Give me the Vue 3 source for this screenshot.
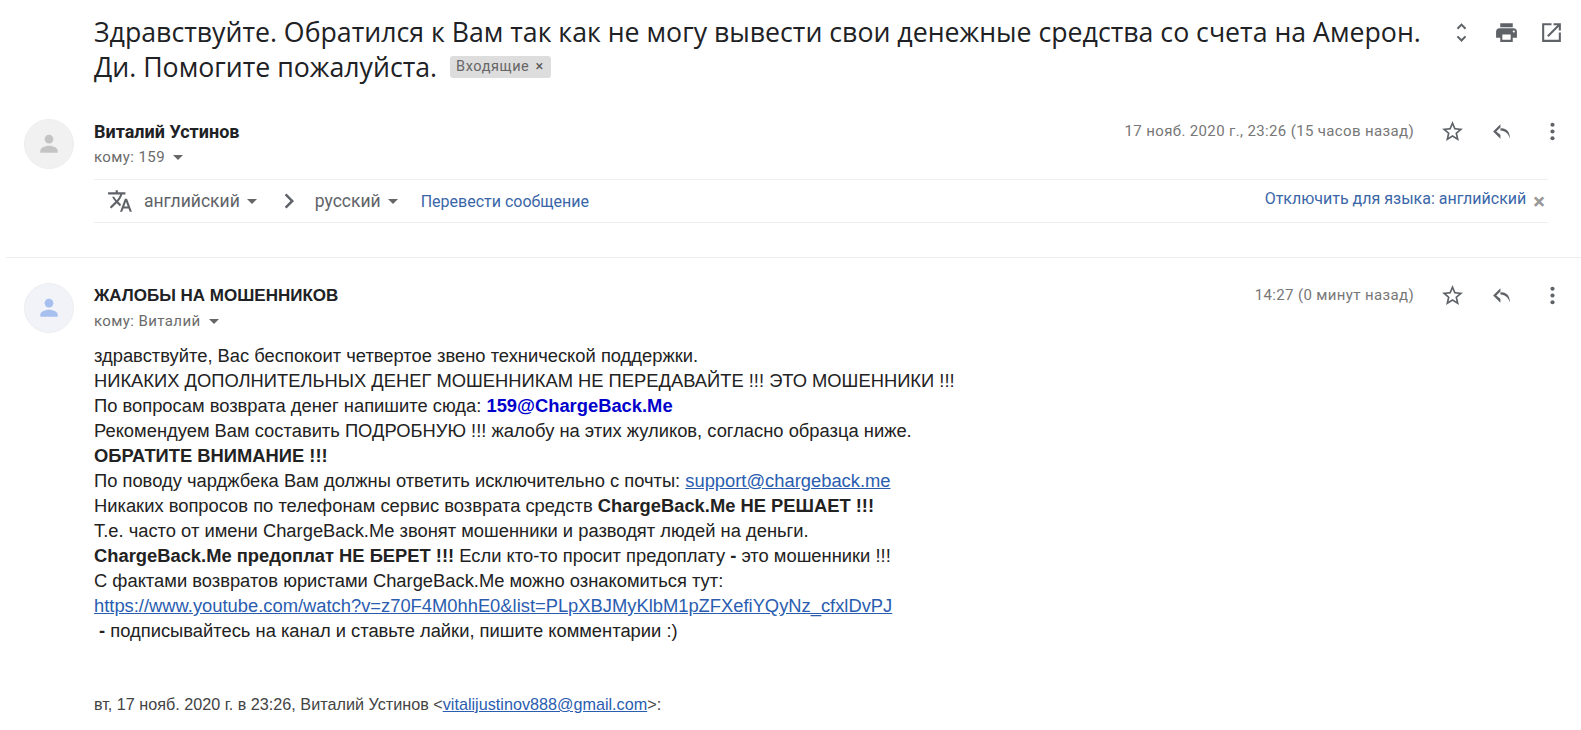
<template>
  <div class="thread">
    <div class="subject-row">
      <h2 class="subject">
        Здравствуйте. Обратился к Вам так как не могу вывести свои денежные средства со счета на Амерон. Ди. Помогите пожалуйста.
        <span class="label"><span>Входящие</span><span class="label-x">×</span></span>
      </h2>
      <div class="subject-icons">
        <svg viewBox="0 0 24 24" class="icon"><path d="M12 5.83 15.17 9l1.41-1.41L12 3 7.41 7.59 8.83 9 12 5.83zm0 12.34L8.83 15l-1.41 1.41L12 21l4.59-4.59L15.17 15 12 18.17z" /></svg>
        <svg viewBox="0 0 24 24" class="icon"><path d="M19 8H5c-1.66 0-3 1.34-3 3v6h4v4h12v-4h4v-6c0-1.66-1.34-3-3-3zm-3 11H8v-5h8v5zm3-7c-.55 0-1-.45-1-1s.45-1 1-1 1 .45 1 1-.45 1-1 1zm-1-9H6v4h12V3z" /></svg>
        <svg viewBox="0 0 24 24" class="icon"><path d="M19 19H5V5h7V3H3v18h18v-9h-2v7zM14 3v2h3.590l-9.830 9.830 1.410 1.410L19 6.410V10h2V3h-7z" /></svg>
      </div>
    </div>

    <section v-for="msg in messages" :key="msg.name" class="message" :class="msg.cls">
      <div class="avatar" :class="{ blue: msg.blue }">
        <svg viewBox="0 0 24 24"><circle cx="12" cy="7.500" r="4" /><path d="M4 20v-2c0-3 5.300-4.400 8-4.400s8 1.400 8 4.400v2z" /></svg>
      </div>
      <div class="message-main">
        <div class="head">
          <div>
            <div class="sender">{{ msg.name }}</div>
            <div class="to">{{ msg.to }} <span class="caret"></span></div>
          </div>
          <div class="head-right">
            <span class="date">{{ msg.date }}</span>
            <svg viewBox="0 0 24 24" class="icon"><path d="M22 9.240l-7.190-.620L12 2 9.190 8.630 2 9.240l5.460 4.730L5.820 21 12 17.270 18.180 21l-1.630-7.030L22 9.240zM12 15.400l-3.760 2.270 1-4.280-3.320-2.880 4.380-.380L12 6.100l1.710 4.040 4.380.380-3.320 2.880 1 4.280L12 15.400z" /></svg>
            <svg viewBox="0 0 24 24" class="icon"><path d="M10 9V5l-7 7 7 7v-2.400l-.010-1.600L6 12l4-3.900V9zm0 0v2c5 .500 8 3 9 8 .400-5-2-10.500-9-10z" /></svg>
            <svg viewBox="0 0 24 24" class="icon"><circle cx="12" cy="5.500" r="2" /><circle cx="12" cy="12" r="2" /><circle cx="12" cy="18.500" r="2" /></svg>
          </div>
        </div>

        <div v-if="msg.translate" class="translate-bar">
          <svg viewBox="0 0 24 24" class="translate-icon"><path d="M12.870 15.070l-2.540-2.510.030-.030c1.740-1.940 2.980-4.170 3.710-6.530H17V4h-7V2H8v2H1v1.990h11.170C11.500 7.920 10.440 9.750 9 11.350 8.070 10.320 7.300 9.190 6.690 8h-2c.730 1.630 1.730 3.170 2.980 4.560l-5.090 5.020L4 19l5-5 3.110 3.110.760-2.040zM18.500 10h-2L12 22h2l1.120-3h4.750L21 22h2l-4.500-12zm-2.620 7l1.620-4.330L19.120 17h-3.240z" /></svg>
          <span class="lang">английский</span><span class="caret"></span>
          <svg viewBox="0 0 24 24" class="chevron"><path d="M8.590 16.590 13.170 12 8.590 7.410 10 6l6 6-6 6z" /></svg>
          <span class="lang">русский</span><span class="caret"></span>
          <a class="translate-link">Перевести сообщение</a>
          <span class="spacer"></span>
          <a class="disable-link">Отключить для языка: английский</a>
          <span class="close-x">×</span>
        </div>

        <div v-if="msg.body" class="body">
          <div>здравствуйте, Вас беспокоит четвертое звено технической поддержки.</div>
          <div>НИКАКИХ ДОПОЛНИТЕЛЬНЫХ ДЕНЕГ МОШЕННИКАМ НЕ ПЕРЕДАВАЙТЕ !!! ЭТО МОШЕННИКИ !!!</div>
          <div>По вопросам возврата денег напишите сюда: <b class="mail-blue">159@ChargeBack.Me</b></div>
          <div>Рекомендуем Вам составить ПОДРОБНУЮ !!! жалобу на этих жуликов, согласно образца ниже.</div>
          <div><b>ОБРАТИТЕ ВНИМАНИЕ !!!</b></div>
          <div>По поводу чарджбека Вам должны ответить исключительно с почты: <a>support@chargeback.me</a></div>
          <div>Никаких вопросов по телефонам сервис возврата средств <b>ChargeBack.Me НЕ РЕШАЕТ !!!</b></div>
          <div>Т.е. часто от имени ChargeBack.Me звонят мошенники и разводят людей на деньги.</div>
          <div><b>ChargeBack.Me предоплат НЕ БЕРЕТ !!!</b> Если кто-то просит предоплату <b>-</b> это мошенники !!!</div>
          <div>С фактами возвратов юристами ChargeBack.Me можно ознакомиться тут:</div>
          <div><a>https://www.youtube.com/watch?v=z70F4M0hhE0&amp;list=PLpXBJMyKlbM1pZFXefiYQyNz_cfxlDvPJ</a></div>
          <div>&nbsp;<b>-</b> подписывайтесь на канал и ставьте лайки, пишите комментарии :)</div>
          <div class="quote-head">вт, 17 нояб. 2020 г. в 23:26, Виталий Устинов &lt;<a>vitalijustinov888@gmail.com</a>&gt;:</div>
        </div>
      </div>
    </section>
  </div>
</template>

<script setup>
const messages = [
  {
    name: 'Виталий Устинов',
    to: 'кому: 159',
    date: '17 нояб. 2020 г., 23:26 (15 часов назад)',
    translate: true,
    cls: 'first'
  },
  {
    name: 'ЖАЛОБЫ НА МОШЕННИКОВ',
    to: 'кому: Виталий',
    date: '14:27 (0 минут назад)',
    blue: true,
    body: true,
    cls: 'second'
  }
];
</script>

<style>
html, body {
  background: #fff;
  overflow: hidden;
}
</style>

<style scoped>
.thread {
  width: 1581px;
  height: 730px;
  overflow: hidden;
  font-family: Roboto, "Liberation Sans", sans-serif;
  color: #222;
  background: #fff;
}

.subject-row {
  display: flex;
  align-items: flex-start;
  padding: 14px 20px 0 94px;
  height: 105px;
  box-sizing: border-box;
}

.subject {
  margin: 0;
  width: 1335px;
  flex: none;
  font-family: "Open Sans", sans-serif;
  font-size: 26.700px;
  font-weight: 400;
  line-height: 35px;
  color: #202124;
}

.label {
  display: inline-flex;
  gap: 6px;
  margin-left: 6px;
  padding: 0 7px 0 6px;
  height: 22px;
  line-height: 22px;
  vertical-align: 6px;
  background: #ddd;
  border-radius: 3px;
  font-family: Roboto, sans-serif;
  font-size: 14.500px;
  letter-spacing: .6px;
  color: #666;
}

.label-x {
  color: #555;
}

.subject-icons {
  display: flex;
  gap: 20px;
  margin-left: 20px;
  padding-top: 6px;
}

.icon {
  width: 25px;
  height: 25px;
  fill: #5f6368;
  flex: none;
}

.message {
  display: flex;
  padding-left: 24px;
}

.message.first {
  height: 152px;
  padding-top: 14px;
  box-sizing: border-box;
}

.message.second {
  margin-left: 6px;
  padding-left: 18px;
  border-top: 1px solid #eee;
  padding-top: 25px;
}

.avatar {
  width: 50px;
  height: 50px;
  border-radius: 50%;
  background: #f1f1f1;
  border: 1px solid #eee;
  box-sizing: border-box;
  display: flex;
  align-items: center;
  justify-content: center;
  flex: none;
}

.avatar svg {
  width: 26px;
  height: 26px;
  fill: #c4c4c4;
}

.avatar.blue {
  background: #f1f3f8;
}

.avatar.blue svg {
  fill: #a6bfee;
}

.message-main {
  margin-left: 20px;
  width: 1477px;
}

.head {
  display: flex;
  justify-content: space-between;
}

.sender {
  font-size: 18px;
  font-weight: 700;
  line-height: 25px;
  color: #202124;
}

.second .sender {
  font-family: "Liberation Sans", sans-serif;
  font-size: 17px;
}

.to {
  font-size: 15px;
  line-height: 24px;
  margin-top: 1px;
  color: #6b6b6b;
  letter-spacing: .4px;
}

.caret {
  display: inline-block;
  width: 0;
  height: 0;
  margin-left: 4px;
  vertical-align: 2px;
  border-left: 5px solid transparent;
  border-right: 5px solid transparent;
  border-top: 5px solid #666;
}

.head-right {
  display: flex;
  align-items: flex-start;
  gap: 25px;
  margin-right: 6px;
}

.date {
  font-size: 15px;
  line-height: 24px;
  letter-spacing: .36px;
  margin-right: 1px;
  color: #777;
}

.translate-bar {
  display: flex;
  align-items: center;
  height: 42px;
  margin-top: 10px;
  border-top: 1px solid #eee;
  border-bottom: 1px solid #eee;
  font-size: 17.500px;
  color: #5f6368;
  width: 1454px;
}

.translate-bar .caret {
  margin-left: 7px;
}

.translate-icon {
  width: 26px;
  height: 26px;
  fill: #5f6368;
  margin: 0 11px 0 13px;
}

.chevron {
  width: 30px;
  height: 30px;
  fill: #5f6368;
  margin: 0 11px 0 17px;
}

.translate-link {
  margin-left: 23px;
  font-size: 16px;
  color: #3a66a8;
}

.spacer {
  flex: 1;
}

.disable-link {
  font-size: 16px;
  color: #3a66a8;
  margin-bottom: 6px;
}

.close-x {
  margin: 0 3px 0 7px;
  font-size: 22px;
  font-weight: 700;
  color: #999;
}

.body {
  font-family: "Liberation Sans", sans-serif;
  font-size: 18.350px;
  line-height: 25px;
  color: #222;
  margin-top: 10px;
}

.body a {
  color: #2a5db0;
  text-decoration: underline;
}

.mail-blue {
  color: #0000cc;
}

.quote-head {
  margin-top: 49px;
  font-size: 16.200px;
  color: #444;
}
</style>
